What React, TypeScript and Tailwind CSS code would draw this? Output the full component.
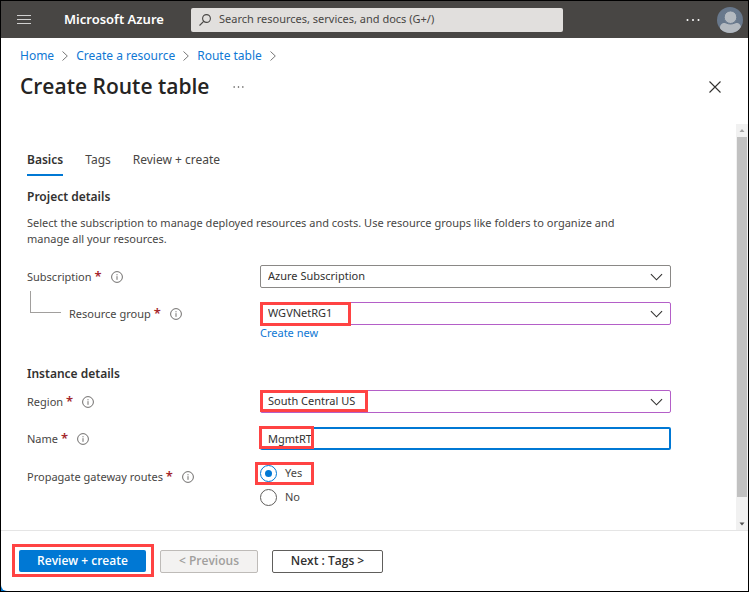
import { useState, type ReactNode } from "react";

function Chevron({ className }: { className: string }) {
  return (
    <svg viewBox="0 0 14 8" fill="none" stroke="currentColor" strokeWidth="1.2" className={className} aria-hidden="true">
      <path d="M1 1l6 6 6-6" />
    </svg>
  );
}

function Separator() {
  return (
    <svg viewBox="0 0 6 10" fill="none" stroke="currentColor" strokeWidth="1" className="h-[10px] w-[6px] text-[#777]" aria-hidden="true">
      <path d="M.5.5L5.300 5l-4.800 4.500" />
    </svg>
  );
}

function InfoIcon() {
  return (
    <svg viewBox="0 0 12 12" fill="none" stroke="#605e5c" strokeWidth=".9" className="ml-[9px] h-3 w-3 shrink-0" aria-hidden="true">
      <circle cx="6" cy="6" r="5.400" />
      <path d="M6 5.200v3.600M6 3.200v1.100" />
    </svg>
  );
}

function Dots({ className }: { className: string }) {
  return (
    <svg viewBox="0 0 14 2" fill="currentColor" className={className} aria-hidden="true">
      <circle cx="1.500" cy="1" r="1" />
      <circle cx="7" cy="1" r="1" />
      <circle cx="12.500" cy="1" r="1" />
    </svg>
  );
}

function Highlight({ className }: { className: string }) {
  return <span className={`pointer-events-none absolute border-3 border-[#ff4343] ${className}`} />;
}

function FieldLabel({ htmlFor, children }: { htmlFor?: string; children: ReactNode }) {
  const content = (
    <>
      {children} <span className="text-[13px] leading-4 font-semibold text-[#a4262c]">*</span>
    </>
  );
  return (
    <div className="flex items-center">
      {htmlFor ? <label htmlFor={htmlFor}>{content}</label> : <span id="propagate-label">{content}</span>}
      <InfoIcon />
    </div>
  );
}

function SelectBox({ id, value, tone }: { id: string; value: string; tone: string }) {
  return (
    <>
      <select id={id} className={`h-[23px] w-full appearance-none rounded-xs border bg-white px-[7px] text-[#323130] outline-none ${tone}`}>
        <option>{value}</option>
      </select>
      <Chevron className="pointer-events-none absolute top-2 right-2 h-[8px] w-[13px] text-[#323130]" />
    </>
  );
}

const radioClass =
  "relative h-[17px] w-[17px] shrink-0 appearance-none rounded-full border border-[#605e5c] bg-white checked:border-[#0078d4] checked:before:absolute checked:before:inset-[4px] checked:before:rounded-full checked:before:bg-[#0078d4] checked:before:content-['']";

const row = "flex h-[23px] items-center";
const labelColumn = "w-[233px] shrink-0";
const fieldColumn = "relative h-[23px] min-w-0 flex-1";

export default function App() {
  const [name, setName] = useState("MgmtRT");
  const [propagate, setPropagate] = useState(true);

  return (
    <div className="flex min-h-screen flex-col border border-black bg-[#0078d4] font-['Noto_Sans','Open_Sans',sans-serif] text-[11px] text-[#484644]">
      <header className="flex h-[37px] shrink-0 items-center bg-[#484644] pr-[5px] pl-4 text-white">
        <button type="button" aria-label="Show portal menu" className="flex w-[14px] flex-col gap-[3px]">
          <span className="h-px w-full bg-[#d0d0d0]" />
          <span className="h-px w-full bg-[#d0d0d0]" />
          <span className="h-px w-full bg-[#d0d0d0]" />
        </button>
        <a href="#home" className="ml-[33px] w-[127px] shrink-0 text-[13px] font-semibold">
          Microsoft Azure
        </a>
        <div className="flex h-6 max-w-[372px] flex-1 items-center rounded-xs bg-[#e1dfdd] pl-2 text-[#484644]">
          <svg viewBox="0 0 12 12" fill="none" stroke="currentColor" strokeWidth="1.100" className="h-3 w-3 shrink-0" aria-hidden="true">
            <circle cx="7.500" cy="4.500" r="3.900" />
            <path d="M4.700 7.300L.5 11.500" />
          </svg>
          <input
            type="search"
            aria-label="Search"
            placeholder="Search resources, services, and docs (G+/)"
            className="ml-2 min-w-0 flex-1 bg-transparent outline-none placeholder:text-[#484644]"
          />
        </div>
        <button type="button" aria-label="More" className="ml-auto">
          <Dots className="h-[2px] w-[14px]" />
        </button>
        <button type="button" aria-label="Account" className="ml-[17px]">
          <svg viewBox="0 0 26 26" className="h-[26px] w-[26px]" aria-hidden="true">
            <clipPath id="avatar">
              <circle cx="13" cy="13" r="13" />
            </clipPath>
            <g clipPath="url(#avatar)">
              <rect width="26" height="26" fill="#68788c" />
              <path d="M3 21c0-3.500 2-5 4.500-5 1.500 0 2.500 1.500 6 1.500s4.500-1.500 6-1.500c2.500 0 4.500 1.500 4.500 5v5H3z" fill="#b3b9c0" />
              <circle cx="13.500" cy="10.200" r="6.300" fill="#b3b9c0" stroke="#68788c" strokeWidth="1" />
            </g>
          </svg>
        </button>
      </header>

      <div className="shrink-0 bg-white pr-[27px] pl-[19px]">
        <nav aria-label="Breadcrumb" className="flex h-[35px] items-center gap-2 text-xs text-[#0f78d4]">
          <a href="#home">Home</a>
          <Separator />
          <a href="#create">Create a resource</a>
          <Separator />
          <a href="#route">Route table</a>
          <Separator />
        </nav>
        <div className="flex h-[51px] items-start">
          <h1 className="font-['Open_Sans','Noto_Sans',sans-serif] text-[21px] leading-[26px] font-semibold text-[#252423]">
            Create Route table
          </h1>
          <button type="button" aria-label="More actions" className="ml-6 flex h-7 items-center text-[#484644]">
            <Dots className="h-[2px] w-[11px]" />
          </button>
          <button type="button" aria-label="Close" className="ml-auto flex h-7 items-center text-[#323130]">
            <svg viewBox="0 0 12 12" stroke="currentColor" strokeWidth="1.100" className="h-3 w-3" aria-hidden="true">
              <path d="M.5.5l11 11M11.500.5l-11 11" />
            </svg>
          </button>
        </div>
      </div>

      <main className="flex flex-1 bg-white">
        <form className="min-w-0 flex-1 pt-[27px] pr-[65px] pl-[26px]">
          <div role="tablist" className="flex h-[25px] items-start gap-[22px] text-xs">
            <button type="button" role="tab" aria-selected="true" className="h-[25px] border-b-2 border-[#0078d4] pb-[5px] font-semibold text-[#323130]">
              Basics
            </button>
            <button type="button" role="tab" aria-selected="false" className="h-[25px] pb-[7px]">
              Tags
            </button>
            <button type="button" role="tab" aria-selected="false" className="h-[25px] pb-[7px]">
              Review + create
            </button>
          </div>

          <h2 className="mt-[13px] text-xs leading-4 font-semibold text-[#323130]">Project details</h2>
          <p className="mt-[10px] max-w-[620px] leading-4">
            Select the subscription to manage deployed resources and costs. Use resource groups like folders to organize and manage all your
            resources.
          </p>

          <div className={`mt-[18px] ${row}`}>
            <div className={labelColumn}>
              <FieldLabel htmlFor="subscription">Subscription</FieldLabel>
            </div>
            <div className={fieldColumn}>
              <SelectBox id="subscription" value="Azure Subscription" tone="border-[#8a8886]" />
            </div>
          </div>

          <div className={`mt-[14px] ${row}`}>
            <div className={`flex items-center ${labelColumn}`}>
              <span className="mr-2 mb-6 ml-[3px] h-[22px] w-[31px] border-b border-l border-[#a19f9d]" />
              <FieldLabel htmlFor="group">Resource group</FieldLabel>
            </div>
            <div className={fieldColumn}>
              <SelectBox id="group" value="WGVNetRG1" tone="border-[#b45fc8]" />
              <Highlight className="top-0 left-0 h-6 w-[91px]" />
            </div>
          </div>
          <div className="flex pl-[233px]">
            <a href="#new" className="leading-4 text-[#0f78d4]">
              Create new
            </a>
          </div>

          <h2 className="mt-[25px] text-xs leading-4 font-semibold text-[#323130]">Instance details</h2>
          <div className={`mt-2 ${row}`}>
            <div className={labelColumn}>
              <FieldLabel htmlFor="region">Region</FieldLabel>
            </div>
            <div className={fieldColumn}>
              <SelectBox id="region" value="South Central US" tone="border-[#b45fc8]" />
              <Highlight className="top-0 left-0 h-[22px] w-[108px]" />
            </div>
          </div>

          <div className={`mt-[14px] ${row}`}>
            <div className={labelColumn}>
              <FieldLabel htmlFor="name">Name</FieldLabel>
            </div>
            <div className={fieldColumn}>
              <input
                id="name"
                type="text"
                value={name}
                onChange={(e) => setName(e.target.value)}
                className="h-[23px] w-full rounded-xs border-2 border-[#0078d4] bg-white px-[6px] text-[#323130] outline-none"
              />
              <Highlight className="-top-px -left-px h-[23px] w-[55px]" />
            </div>
          </div>

          <div className={`mt-[15px] ${row}`}>
            <div className={labelColumn}>
              <FieldLabel>Propagate gateway routes</FieldLabel>
            </div>
            <div role="radiogroup" aria-labelledby="propagate-label" className="flex h-[23px] flex-col">
              <label className="relative flex h-[17px] shrink-0 items-center gap-2">
                <input type="radio" name="propagate" checked={propagate} onChange={() => setPropagate(true)} className={radioClass} />
                Yes
                <Highlight className="-top-[3px] -left-[5px] h-[23px] w-[59px]" />
              </label>
              <label className="mt-[7px] flex h-[17px] shrink-0 items-center gap-2">
                <input type="radio" name="propagate" checked={!propagate} onChange={() => setPropagate(false)} className={radioClass} />
                No
              </label>
            </div>
          </div>
        </form>

        <div aria-hidden="true" className="flex w-3 shrink-0 flex-col items-center bg-[#f1f1f1]">
          <svg viewBox="0 0 12 13" className="h-[13px] w-3 shrink-0" fill="#a3a3a3">
            <path d="M3.500 8L6 5l2.500 3z" />
          </svg>
          <div className="w-[10px] flex-1 bg-[#c1c1c1]" />
          <svg viewBox="0 0 12 13" className="mt-5 h-[13px] w-3 shrink-0" fill="#505050">
            <path d="M3.500 5.500h5L6 8.500z" />
          </svg>
        </div>
      </main>

      <footer className="flex h-[61px] shrink-0 items-center rounded-bl-md border-t border-[#e5e5e5] bg-white pl-[18px] font-['Open_Sans','Noto_Sans',sans-serif] text-xs font-semibold">
        <div className="relative">
          <button type="button" className="block h-[22px] w-[127px] rounded-xs bg-[#0078d4] text-white">
            Review + create
          </button>
          <Highlight className="-top-[6px] -left-[7px] h-[33px] w-[142px]" />
        </div>
        <button type="button" disabled className="ml-[14px] h-[23px] w-[98px] rounded-xs border border-[#bebbb8] bg-[#f3f2f1] text-[#a19f9d]">
          &lt; Previous
        </button>
        <button type="button" className="ml-[14px] h-[23px] w-[111px] rounded-xs border border-[#605e5c] bg-white text-[#323130]">
          Next : Tags &gt;
        </button>
      </footer>
    </div>
  );
}
